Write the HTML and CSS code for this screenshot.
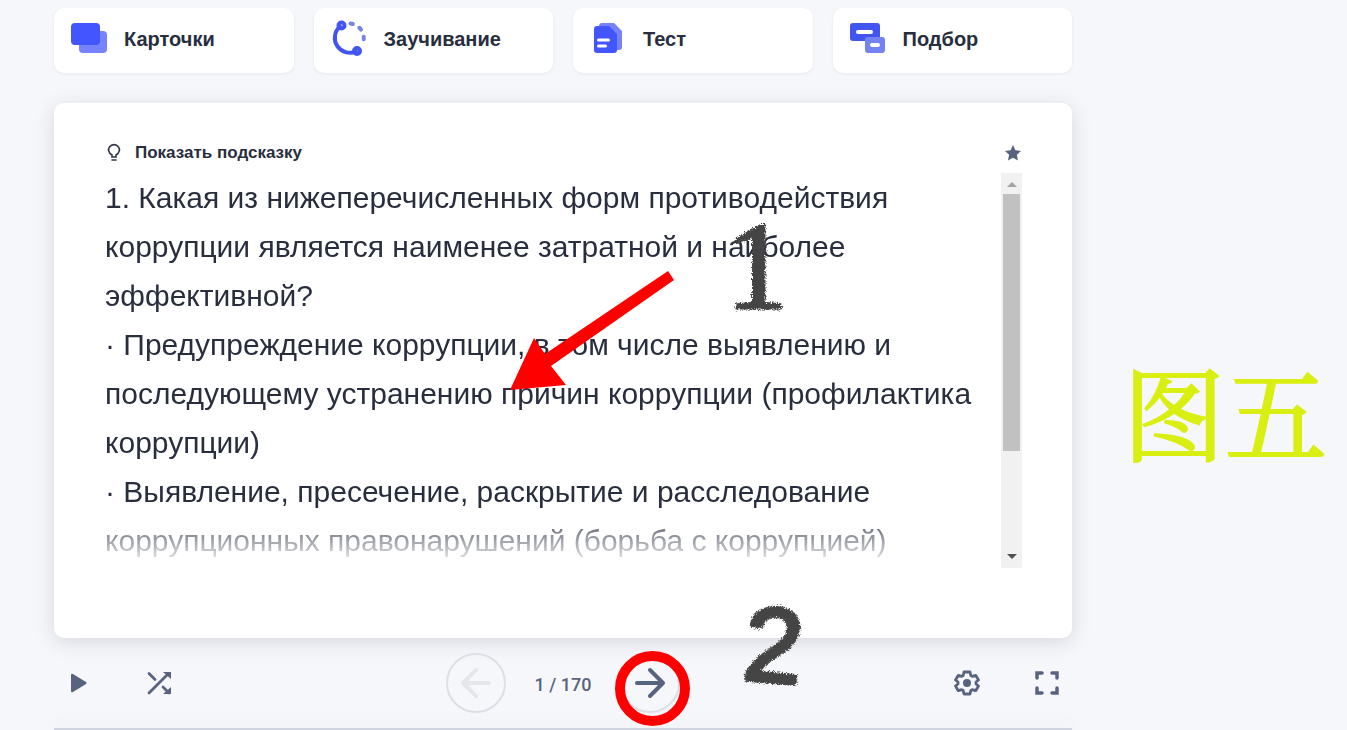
FILE: index.html
```html
<!doctype html>
<html lang="ru">

<head>
    <meta charset="UTF-8" />
    <meta name="viewport" content="width=device-width, initial-scale=1.0" />
    <title>Карточки</title>
    <link rel="stylesheet" href="styles.css">
</head>

<body>

    <div class="page">
        <main class="study">
            <nav class="modes">
                <a href="#" class="mode">
                    <svg width="36" height="36" viewBox="0 2 36 36">
                        <rect x="8" y="11" width="28" height="22" rx="4" fill="#7583ff" />
                        <rect x="0" y="3" width="29" height="22" rx="4" fill="#4255ff" />
                    </svg>
                    Карточки
                </a>
                <a href="#" class="mode">
                    <svg width="36" height="36" viewBox="0 2 36 36" fill="none" stroke-linecap="round">
                        <path d="M19.500 3.500A15 15 0 0 1 31 25.500" stroke="#7583e8" stroke-width="4" stroke-dasharray="2.500 7.500" />
                        <path d="M9 6.500A15 15 0 0 0 25 31.500" stroke="#4255f0" stroke-width="4" />
                        <circle cx="10.500" cy="5.500" r="3" stroke="#4255f0" stroke-width="4" />
                        <circle cx="26" cy="31" r="3" stroke="#4255f0" stroke-width="4" />
                    </svg>
                    Заучивание
                </a>
                <a href="#" class="mode">
                    <svg width="36" height="36" viewBox="0 2 36 36">
                        <path d="M12 3h12l8 8v16q0 3-3 3H12q-3 0-3-3V6q0-3 3-3z" fill="#7583f5" />
                        <path d="M7 6h12l8 8v16q0 3-3 3H7q-3 0-3-3V9q0-3 3-3z" fill="#4255ff" />
                        <path d="M8.500 20h10M8.500 26h7" stroke="#fff" stroke-width="3" stroke-linecap="round" />
                    </svg>
                    Тест
                </a>
                <a href="#" class="mode">
                    <svg width="36" height="36" viewBox="0 2 36 36">
                        <rect x="0" y="3" width="30" height="18" rx="3" fill="#4255f0" />
                        <path d="M8 12h13" stroke="#fff" stroke-width="4" stroke-linecap="round" />
                        <rect x="15" y="17" width="20" height="16" rx="3" fill="#7583f0" />
                        <path d="M22 25h6" stroke="#fff" stroke-width="4" stroke-linecap="round" />
                    </svg>
                    Подбор
                </a>
            </nav>

            <section class="card">
                <header class="card-header">
                    <button class="hint">
                        <svg width="18" height="20" viewBox="0 0 18 20" fill="none" stroke="#303545" stroke-width="1.6" stroke-linecap="round">
                            <path d="M7 14v-2C3 9.500 3 6 4.500 4a5.500 5.500 0 0 1 9 0C15 6 15 9.500 11 12v2zM7 17h4" />
                        </svg>
                        Показать подсказку
                    </button>
                    <button class="star" aria-label="Избранное">
                        <svg width="18" height="18" viewBox="0 0 18 18" fill="#586380">
                            <path d="M9 1l2.400 5.200 5.600.700-4.100 3.900L14 16.500l-5-2.800-5 2.800 1.100-5.700L1 6.900l5.600-.700z" />
                        </svg>
                    </button>
                </header>
                <div class="card-body">
                    <div class="question">
                        <p>1. Какая из нижеперечисленных форм противодействия коррупции является наименее затратной и наиболее эффективной?</p>
                        <p>· Предупреждение коррупции, в том числе выявлению и последующему устранению причин коррупции (профилактика коррупции)</p>
                        <p>· Выявление, пресечение, раскрытие и расследование коррупционных правонарушений (борьба с коррупцией)</p>
                    </div>
                    <div class="scrollbar" aria-hidden="true">
                        <span class="up"></span>
                        <span class="thumb"></span>
                        <span class="down"></span>
                    </div>
                </div>
            </section>

            <div class="toolbar">
                <div class="tools">
                    <button class="tool" aria-label="Воспроизвести">
                        <svg width="26" height="26" viewBox="0 0 26 26" fill="#586380">
                            <path d="M5 5q0-2 2-1l13 8q1.500 1 0 2L7 22q-2 1-2-1z" />
                        </svg>
                    </button>
                    <button class="tool" aria-label="Перемешать">
                        <svg width="26" height="26" viewBox="0 0 26 26" fill="none" stroke="#586380" stroke-width="2.800" stroke-linecap="round">
                            <path d="M3 23L22 4M3 3.500l6 6M17 17l6 6" />
                            <path d="M17 2h8v7zM17 24h8v-7z" fill="#586380" stroke="none" />
                        </svg>
                    </button>
                </div>
                <div class="pager">
                    <button class="round" aria-label="Назад" disabled>
                        <svg width="32" height="32" viewBox="0 0 32 32" fill="none" stroke="#e4e6ea" stroke-width="4" stroke-linecap="round" stroke-linejoin="round">
                            <path d="M29 16H3M16 3L3 16l13 13" />
                        </svg>
                    </button>
                    <span class="count">1 / 170</span>
                    <button class="round" aria-label="Вперёд">
                        <svg width="32" height="32" viewBox="0 0 32 32" fill="none" stroke="#586380" stroke-width="4" stroke-linecap="round" stroke-linejoin="round">
                            <path d="M3 16h26M16 3l13 13-13 13" />
                        </svg>
                        <span class="ring"></span>
                    </button>
                </div>
                <div class="tools right">
                    <button class="tool" aria-label="Настройки">
                        <svg width="26" height="26" viewBox="0 0 26 26" fill="none" stroke="#586380" stroke-width="2.800" stroke-linejoin="round">
                            <path d="M10 2h6l.8 3.500 1.500.900 3.400-1.100 2.800 4.700L22 12v2l2.500 2-2.800 4.700-3.400-1.100-1.500.900L16 24h-6l-.8-3.500-1.500-.900-3.400 1.100L1.500 16 4 14v-2L1.500 10l2.800-4.700 3.400 1.100 1.500-.900z" />
                            <circle cx="13" cy="13" r="4" fill="#586380" stroke="none" />
                        </svg>
                    </button>
                    <button class="tool" aria-label="Во весь экран">
                        <svg width="26" height="26" viewBox="0 0 26 26" fill="none" stroke="#586380" stroke-width="3.500" stroke-linecap="round">
                            <path d="M3 8V3h5M18 3h5v5M23 18v5h-5M8 23H3v-5" />
                        </svg>
                    </button>
                </div>
            </div>
            <div class="progress"></div>

            <!-- marks drawn over the card -->
            <svg class="marks" width="1018" height="722" viewBox="0 0 1018 722">
                <defs>
                    <filter id="rough" x="-20%" y="-20%" width="140%" height="140%">
                        <feTurbulence type="fractalNoise" baseFrequency="0.8" numOctaves="2" result="noise" />
                        <feDisplacementMap in="SourceGraphic" in2="noise" scale="6" xChannelSelector="R" yChannelSelector="G" />
                    </filter>
                </defs>
                <path d="M614 263l6 9-123 86 15 19-56 5 24-52 11 16z" fill="#f00" />
                <g filter="url(#rough)" class="ink">
                    <text x="672" y="300" class="one">1</text>
                    <text x="690" y="674" class="two" transform="rotate(5 720 640)">2</text>
                </g>
            </svg>
        </main>

        <aside class="figure" lang="zh">图五</aside>
    </div>

</body>

</html>
```

FILE: styles.css
```css
* {
    box-sizing: border-box;
}

body {
    margin: 0;
    background: #f6f7fb;
    color: #282e3e;
    font-family: "Liberation Sans", Arial, sans-serif;
}

button {
    border: none;
    padding: 0;
    background: none;
    color: inherit;
    font-family: inherit;
    cursor: pointer;
}

.page {
    display: grid;
    grid-template-columns: 1fr 275px;
    padding-left: 54px;
}

.study {
    position: relative;
    min-width: 0;
    padding-top: 8px;
}

.modes {
    display: grid;
    grid-template-columns: repeat(4, 1fr);
    gap: 20px;
    margin-bottom: 30px;
}

.mode {
    display: flex;
    align-items: center;
    gap: 17px;
    height: 65px;
    padding: 0 17px 2px;
    border-radius: 10px;
    background: #fff;
    box-shadow: 0 1px 3px rgba(40, 46, 62, 0.08);
    color: #282e3e;
    font-size: 20px;
    font-weight: bold;
    text-decoration: none;
}

.mode svg {
    overflow: visible;
}

.card {
    padding: 40px 50px 70px 51px;
    border-radius: 10px;
    background: #fff;
    box-shadow: 0 4px 20px rgba(40, 46, 62, 0.15);
}

.card-header {
    display: flex;
    justify-content: space-between;
    align-items: center;
    height: 20px;
    margin-bottom: 10px;
}

.hint {
    display: flex;
    align-items: center;
    gap: 12px;
    font-size: 17px;
    font-weight: bold;
}

.star {
    display: flex;
}

.card-body {
    display: flex;
    justify-content: space-between;
    height: 395px;
}

.question {
    flex: 1;
    overflow: hidden;
    font-size: 30px;
    line-height: 49px;
    -webkit-mask-image: linear-gradient(#000 344px, rgba(0, 0, 0, 0.6) 358px, transparent 395px);
    mask-image: linear-gradient(#000 344px, rgba(0, 0, 0, 0.6) 358px, transparent 395px);
}

.question p {
    margin: 0;
}

.scrollbar {
    display: flex;
    flex-direction: column;
    align-items: center;
    width: 21px;
    padding: 9px 2px;
    background: #f1f1f1;
}

.up,
.down {
    border: 5px solid transparent;
}

.up {
    border-top: none;
    border-bottom-color: #a3a3a3;
}

.thumb {
    width: 100%;
    height: 257px;
    margin-top: 7px;
    background: #c1c1c1;
}

.down {
    margin-top: auto;
    border-bottom: none;
    border-top-color: #505050;
}

.toolbar {
    display: grid;
    grid-template-columns: 1fr auto 1fr;
    align-items: center;
    padding: 15px 0;
}

.tools {
    display: flex;
    gap: 30px;
}

.right {
    justify-content: flex-end;
}

.tool {
    display: flex;
    justify-content: center;
    align-items: center;
    width: 50px;
    height: 50px;
}

.pager {
    display: flex;
    align-items: center;
    gap: 29px;
}

.round {
    position: relative;
    display: flex;
    justify-content: center;
    align-items: center;
    width: 60px;
    height: 60px;
    border: 2px solid #dcdfe6;
    border-radius: 50%;
}

.ring {
    position: absolute;
    top: -4px;
    left: -7px;
    width: 75px;
    height: 75px;
    border: 10px solid #f00;
    border-radius: 50%;
}

.count {
    padding-top: 2px;
    color: #586380;
    font-family: Roboto, sans-serif;
    font-size: 18px;
    font-weight: 500;
}

.progress {
    height: 2px;
    background: #d0d3e0;
    box-shadow: 0 0 20px rgba(40, 46, 62, 0.15);
}

.marks {
    position: absolute;
    top: 8px;
    left: 0;
    pointer-events: none;
}

.ink {
    fill: #444;
    stroke: #444;
    stroke-linejoin: round;
}

.one {
    font-family: "Liberation Serif", serif;
    font-size: 124px;
    stroke-width: 3px;
}

.two {
    font-family: "Liberation Sans", sans-serif;
    font-size: 106px;
    stroke-width: 4px;
}

.figure {
    align-self: center;
    padding: 90px 0 0 51px;
    color: #d9ef12;
    font-family: "Noto Serif CJK SC", "Noto Sans CJK SC", serif;
    font-size: 102px;
    line-height: 100px;
    white-space: nowrap;
    -webkit-text-stroke: 2px #d9ef12;
}
```
